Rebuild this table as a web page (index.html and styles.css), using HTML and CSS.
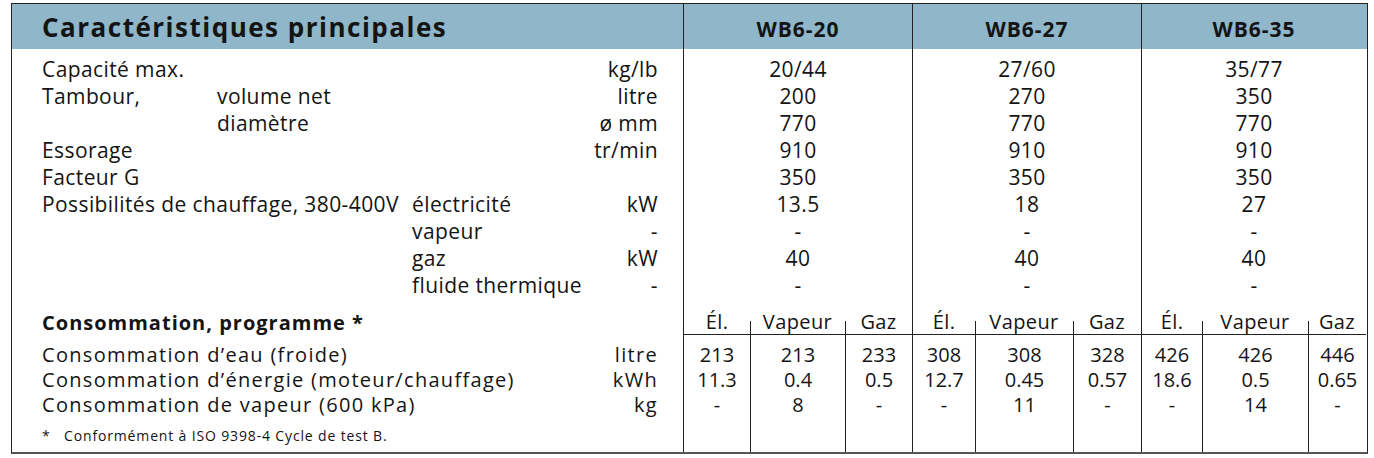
FILE: index.html
```html
<!DOCTYPE html>
<html lang="fr">
<head>
  <meta charset="UTF-8" />
  <title>Caractéristiques principales</title>
  <link rel="stylesheet" href="styles.css">
</head>
<body>
  <div class="sheet">
    <div class="row head">
      <div class="title">Caractéristiques principales</div>
      <div class="model">WB6-20</div>
      <div class="model">WB6-27</div>
      <div class="model">WB6-35</div>
    </div>

    <div class="row spec first">
      <div class="main">Capacité max.</div>
      <div class="unit">kg/lb</div>
      <div class="val">20/44</div><div class="val">27/60</div><div class="val">35/77</div>
    </div>
    <div class="row spec">
      <div class="main">Tambour,</div>
      <div class="sub">volume net</div>
      <div class="unit">litre</div>
      <div class="val">200</div><div class="val">270</div><div class="val">350</div>
    </div>
    <div class="row spec">
      <div class="sub">diamètre</div>
      <div class="unit">ø mm</div>
      <div class="val">770</div><div class="val">770</div><div class="val">770</div>
    </div>
    <div class="row spec">
      <div class="main">Essorage</div>
      <div class="unit">tr/min</div>
      <div class="val">910</div><div class="val">910</div><div class="val">910</div>
    </div>
    <div class="row spec">
      <div class="main">Facteur G</div>
      <div class="val">350</div><div class="val">350</div><div class="val">350</div>
    </div>
    <div class="row spec">
      <div class="main wide">Possibilités de chauffage, 380-400V</div>
      <div class="sub2">électricité</div>
      <div class="unit">kW</div>
      <div class="val">13.5</div><div class="val">18</div><div class="val">27</div>
    </div>
    <div class="row spec">
      <div class="sub2">vapeur</div>
      <div class="unit">-</div>
      <div class="val">-</div><div class="val">-</div><div class="val">-</div>
    </div>
    <div class="row spec">
      <div class="sub2">gaz</div>
      <div class="unit">kW</div>
      <div class="val">40</div><div class="val">40</div><div class="val">40</div>
    </div>
    <div class="row spec">
      <div class="sub2">fluide thermique</div>
      <div class="unit">-</div>
      <div class="val">-</div><div class="val">-</div><div class="val">-</div>
    </div>

    <div class="row cons-head">
      <div class="main bold">Consommation, programme *</div>
      <div class="kind start">Él.</div><div class="kind">Vapeur</div><div class="kind">Gaz</div>
      <div class="kind start">Él.</div><div class="kind">Vapeur</div><div class="kind">Gaz</div>
      <div class="kind start">Él.</div><div class="kind">Vapeur</div><div class="kind">Gaz</div>
    </div>
    <div class="row cons first">
      <div class="main wide">Consommation d’eau (froide)</div>
      <div class="unit">litre</div>
      <div class="cell">213</div><div class="cell">213</div><div class="cell">233</div>
      <div class="cell">308</div><div class="cell">308</div><div class="cell">328</div>
      <div class="cell">426</div><div class="cell">426</div><div class="cell">446</div>
    </div>
    <div class="row cons">
      <div class="main wide">Consommation d’énergie (moteur/chauffage)</div>
      <div class="unit">kWh</div>
      <div class="cell">11.3</div><div class="cell">0.4</div><div class="cell">0.5</div>
      <div class="cell">12.7</div><div class="cell">0.45</div><div class="cell">0.57</div>
      <div class="cell">18.6</div><div class="cell">0.5</div><div class="cell">0.65</div>
    </div>
    <div class="row cons">
      <div class="main wide">Consommation de vapeur (600 kPa)</div>
      <div class="unit">kg</div>
      <div class="cell">-</div><div class="cell">8</div><div class="cell">-</div>
      <div class="cell">-</div><div class="cell">11</div><div class="cell">-</div>
      <div class="cell">-</div><div class="cell">14</div><div class="cell">-</div>
    </div>
    <div class="row foot">
      <div class="note">*&nbsp;&nbsp; Conformément à ISO 9398-4 Cycle de test B.</div>
      <div class="cell"></div><div class="cell"></div><div class="cell"></div>
      <div class="cell"></div><div class="cell"></div><div class="cell"></div>
      <div class="cell"></div><div class="cell"></div><div class="cell"></div>
    </div>
  </div>
</body>
</html>
```

FILE: styles.css
```css
html, body {
  margin: 0;
  padding: 0;
  background-color: white;
  color: #141414;
  font-family: "Open Sans", sans-serif;
}
.sheet {
  width: 1355px;
  margin: 3px 0 0 11px;
  border: 1px solid #222;
  border-bottom: 2px solid #555;
}
.row {
  display: grid;
  grid-template-columns: 30px 175px 195px 165px 80px 26px 67px 95px 67px 63px 98px 68px 61px 106px 58px;
  align-items: center;
  white-space: nowrap;
}
.head {
  height: 45px;
  background-color: #8fb6c9;
}
.title {
  grid-column: 2 / 7;
  font-size: 26px;
  font-weight: 700;
  letter-spacing: 1.5px;
  padding-top: 1px;
}
.model {
  grid-column: span 3;
  align-self: stretch;
  display: flex;
  align-items: center;
  justify-content: center;
  padding-top: 4px;
  border-left: 1px solid #222;
  font-size: 21px;
  font-weight: 700;
  letter-spacing: 1px;
}
.spec {
  font-size: 21px;
  line-height: 27px;
  letter-spacing: 0.4px;
}
.spec.first > div {
  padding-top: 7px;
}
.main {
  grid-column: 2;
  grid-row: 1;
}
.main.wide {
  grid-column: 2 / 5;
}
.bold {
  font-weight: 700;
  grid-column: 2 / 5;
  font-size: 20px;
  letter-spacing: 1px;
}
.sub {
  grid-column: 3;
  grid-row: 1;
}
.sub2 {
  grid-column: 4;
  grid-row: 1;
}
.unit {
  grid-column: 5;
  grid-row: 1;
  text-align: right;
  margin-right: -1px;
}
.val {
  grid-column: span 3;
  align-self: stretch;
  text-align: center;
  border-left: 1px solid #222;
}
.val:nth-last-child(3) {
  grid-column: 7 / span 3;
}
.cons-head {
  height: 36px;
  font-size: 20px;
  line-height: 24px;
  letter-spacing: 0.4px;
  align-items: end;
}
.cons-head .main {
  align-self: end;
}
.kind {
  text-align: center;
  align-self: stretch;
  display: flex;
  align-items: flex-end;
  justify-content: center;
  border-bottom: 1px solid #222;
  background: linear-gradient(#222, #222) left bottom / 1px 13px no-repeat;
}
.kind.start {
  background: none;
  border-left: 1px solid #222;
}
.kind:nth-child(2) {
  grid-column: 7;
}
.cons {
  font-size: 20px;
  line-height: 25px;
}
.cons .main, .cons .unit {
  letter-spacing: 1.3px;
}
.cons.first > div {
  padding-top: 7px;
}
.cell {
  align-self: stretch;
  text-align: center;
  border-left: 1px solid #222;
}
.cons .cell:nth-child(3), .foot .cell:nth-child(2) {
  grid-column: 7;
}
.foot {
  height: 35px;
}
.note {
  grid-column: 2 / 7;
  font-size: 14px;
  line-height: 16px;
  letter-spacing: 0.85px;
  padding-top: 3px;
  white-space: pre;
}
```
